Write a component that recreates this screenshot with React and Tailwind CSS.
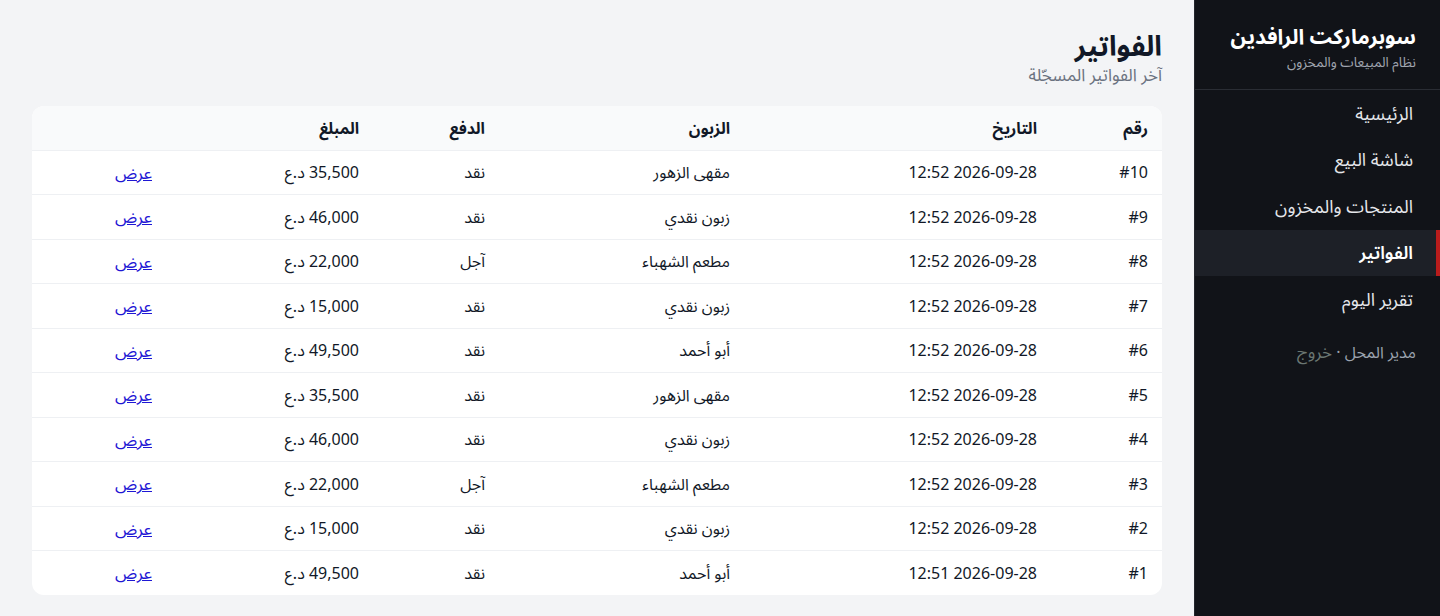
import React from "react";

const invoices = [
  { id: 10, date: "2026-09-28 12:52", customer: "مقهى الزهور", pay: "نقد", amount: "35,500" },
  { id: 9, date: "2026-09-28 12:52", customer: "زبون نقدي", pay: "نقد", amount: "46,000" },
  { id: 8, date: "2026-09-28 12:52", customer: "مطعم الشهباء", pay: "آجل", amount: "22,000" },
  { id: 7, date: "2026-09-28 12:52", customer: "زبون نقدي", pay: "نقد", amount: "15,000" },
  { id: 6, date: "2026-09-28 12:52", customer: "أبو أحمد", pay: "نقد", amount: "49,500" },
  { id: 5, date: "2026-09-28 12:52", customer: "مقهى الزهور", pay: "نقد", amount: "35,500" },
  { id: 4, date: "2026-09-28 12:52", customer: "زبون نقدي", pay: "نقد", amount: "46,000" },
  { id: 3, date: "2026-09-28 12:52", customer: "مطعم الشهباء", pay: "آجل", amount: "22,000" },
  { id: 2, date: "2026-09-28 12:52", customer: "زبون نقدي", pay: "نقد", amount: "15,000" },
  { id: 1, date: "2026-09-28 12:51", customer: "أبو أحمد", pay: "نقد", amount: "49,500" },
];

const navItems = [
  { label: "الرئيسية" },
  { label: "شاشة البيع" },
  { label: "المنتجات والمخزون" },
  { label: "الفواتير", active: true },
  { label: "تقرير اليوم" },
];

export default function App() {
  return (
    <div
      dir="rtl"
      className="flex h-[616px] w-[1440px] overflow-hidden bg-[#f3f4f6] font-['Noto_Sans','Noto_Sans_Arabic',sans-serif] text-[#111827]"
    >
      {/* sidebar */}
      <aside className="w-[246px] shrink-0 border-l border-[#23262d] bg-[#111318] text-white">
        <div className="border-b border-[#2a2d34] px-6 pt-[20px] pb-[17px]">
          <div className="text-[21px] font-bold leading-8">سوبرماركت الرافدين</div>
          <div className="text-[13.5px] leading-5 text-[#a1a6b0]">نظام المبيعات والمخزون</div>
        </div>
        <nav className="flex flex-col">
          {navItems.map((item) => (
            <a
              key={item.label}
              href="#"
              className={`flex h-[46.5px] items-center border-r-4 pr-[23px] text-[18px] ${
                item.active
                  ? "border-[#b91c1c] bg-[#1d2027] font-semibold text-white"
                  : "border-transparent text-[#e5e7eb]"
              }`}
            >
              {item.label}
            </a>
          ))}
        </nav>
        <div className="mt-[16px] pr-[24px] text-[16px] text-[#9ca3af]">
          مدير المحل · <span className="text-[17px] text-[#6b7773]">خروج</span>
        </div>
      </aside>

      {/* main */}
      <main className="flex-1 px-8 pt-[27px]">
        <h1 className="text-[28px] font-bold leading-9">الفواتير</h1>
        <p className="text-[17px] leading-6 text-[#6b7280]">آخر الفواتير المسجّلة</p>

        <div className="mt-[19px] overflow-hidden rounded-xl bg-white">
          <table className="w-full border-collapse text-right text-[16px]">
            <thead className="bg-[#f9fafb]">
              <tr className="h-[44px] border-b border-[#eef0f3]">
                <th className="w-[111px] px-[14px] font-bold">رقم</th>
                <th className="w-[307px] px-[14px] font-bold">التاريخ</th>
                <th className="w-[245px] px-[14px] font-bold">الزبون</th>
                <th className="w-[126px] px-[14px] font-bold">الدفع</th>
                <th className="w-[207px] px-[14px] font-bold">المبلغ</th>
                <th className="px-[14px]"></th>
              </tr>
            </thead>
            <tbody>
              {invoices.map((inv, i) => (
                <tr
                  key={inv.id}
                  className={`h-[44.5px] ${i < invoices.length - 1 ? "border-b border-[#eef0f3]" : ""}`}
                >
                  <td className="px-[14px]">#{inv.id}</td>
                  <td className="px-[14px]">{inv.date}</td>
                  <td className="px-[14px]">{inv.customer}</td>
                  <td className="px-[14px]">{inv.pay}</td>
                  <td className="px-[14px]">{inv.amount} د.ع</td>
                  <td className="px-[14px]">
                    <a href="#" className="text-[17px] text-[#1f17d4] underline">
                      عرض
                    </a>
                  </td>
                </tr>
              ))}
            </tbody>
          </table>
        </div>
      </main>
    </div>
  );
}
